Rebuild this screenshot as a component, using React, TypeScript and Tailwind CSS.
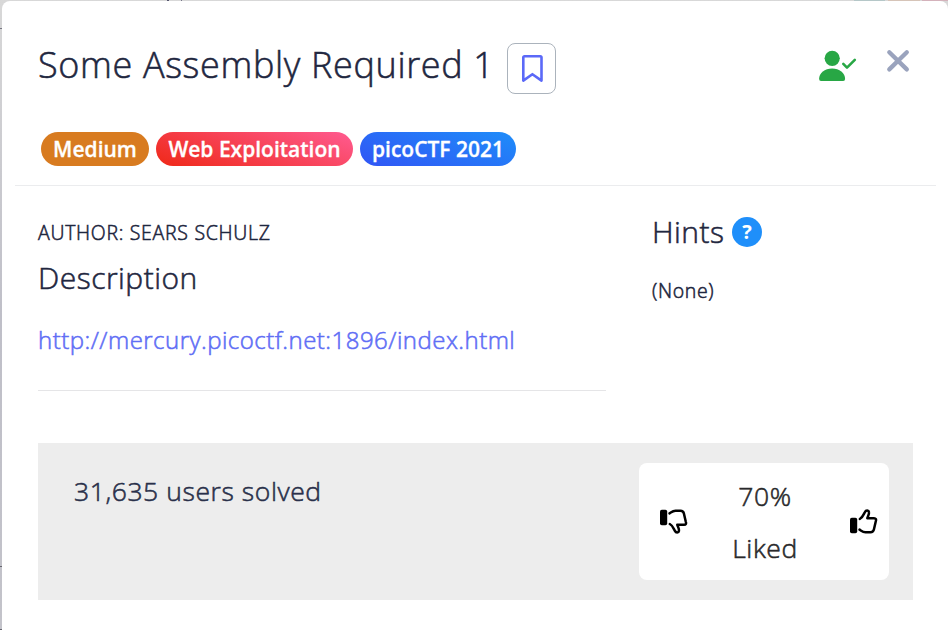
import React from 'react';

function Bookmark() {
  return (
    <svg width="23" height="29" viewBox="0 0 23 29" fill="none" stroke="#5b69f8" strokeWidth="2.6" strokeLinejoin="round" className="ml-0.5">
      <path d="M2.300 3.500q0-1.200 1.200-1.200h15.800q1.200 0 1.200 1.200v23.100l-9.100-6.400-9.100 6.400z" />
    </svg>
  );
}

function Solved() {
  return (
    <svg width="38" height="32" viewBox="0 0 38 32">
      <circle cx="13.2" cy="8.3" r="7.6" fill="#28a745" />
      <path d="M2 31q-1.9 0-1.9-1.9C.1 22.6 5.8 18.4 13.1 18.4S26.100 22.600 26.100 29.100Q26.100 31 24.200 31z" fill="#28a745" />
      <path d="M24.300 13.900L28 17.600L35.800 9.900" fill="none" stroke="#28a745" strokeWidth="2.600" strokeLinecap="round" strokeLinejoin="round" />
    </svg>
  );
}

function Close() {
  return (
    <svg width="24" height="24" viewBox="0 0 24 24" stroke="#9aa3bd" strokeWidth="4.300" strokeLinecap="round">
      <path d="M3.300 3.200L20.800 20.400M20.800 3.200L3.300 20.400" />
    </svg>
  );
}

function Thumb({ down = false }: { down?: boolean }) {
  return (
    <svg width="28" height="25" viewBox="0 0 28 25" className={down ? '-scale-y-100' : ''}>
      <rect x="0" y="8.800" width="7.200" height="15.500" rx="1.800" fill="#000" />
      <path
        d="M9.800 10C12.700 8.500 13.500 5.500 14.900 3.100C15.900 1.100 18.700 1.100 19 3.200C19.300 4.900 18 7 17.300 9.200H24C26 9.200 26.500 10.700 25.800 12.200L23.900 20.500C23.400 22.600 22.200 23.200 20.500 23.200H15.500C12.800 23.200 11.500 21.800 9.500 20.600"
        fill="none" stroke="#000" strokeWidth="2.500" strokeLinecap="round" strokeLinejoin="round"
      />
    </svg>
  );
}

const badge = 'flex h-[34px] items-center justify-center rounded-full pt-px text-[21px] font-semibold text-white whitespace-nowrap [-webkit-text-stroke:0.3px_currentColor]';

export default function App() {
  return (
    <div className="h-[630px] w-[948px] overflow-hidden bg-gradient-to-b from-[#d8d8d8] via-[#bfbfc8] to-[#c3c3ca] font-['Open_Sans',sans-serif] font-light text-[#1f2740] [-webkit-text-stroke:0.55px_currentColor]">
      <div className="flex h-px items-stretch">
        <div className="ml-[167px] w-[2px] bg-[#55566f]" />
        <div className="ml-3 w-px bg-[#77778a]" />
        <div className="ml-[672px] w-8 bg-[#b5c7c8]" />
        <div className="ml-[3px] w-8 bg-[#d6c4b8]" />
        <div className="ml-[2px] w-[27px] bg-[#d4b2bb]" />
      </div>
      <div className="flex h-[629px]">
        <div className="w-[2px] shrink-0 pt-[27px]">
          <div className="h-px bg-[#777783]" />
          <div className="mt-[537px] h-px bg-[#66666f]" />
          <div className="mt-[62px] h-px bg-[#66666f]" />
        </div>
        <main className="h-full w-[946px] rounded-t-lg bg-white">
          <header className="flex h-[93px] items-start pl-9 pt-[42px]">
            <h1 className="mt-[-3px] w-[469px] whitespace-nowrap text-[36px] leading-[49px] tracking-[0.65px]">Some Assembly Required 1</h1>
            <button className="flex h-[51px] w-[49px] items-center justify-center rounded-lg border border-[#abb3bc]"><Bookmark /></button>
            <div className="ml-[263px] mt-[7px]"><Solved /></div>
            <button className="ml-[29px] mt-[6px]"><Close /></button>
          </header>
          <div className="flex gap-[7px] pl-[39px] pt-[38px]">
            <span className={`${badge} w-[108px] bg-[#d87b20]`}>Medium</span>
            <span className={`${badge} w-[197px] bg-[linear-gradient(20deg,#ef2817,#ff5b91)]`}>Web Exploitation</span>
            <span className={`${badge} w-[156px] bg-[linear-gradient(20deg,#3155f5,#1e8df9)]`}>picoCTF 2021</span>
          </div>
          <hr className="ml-[13px] mt-[19px] w-[921px] border-[#ebecee]" />
          <div className="flex h-[257px] pl-9">
            <section className="w-[568px] pt-[33px]">
              <p className="text-[19.5px] leading-[28px] tracking-[0.7px]">AUTHOR: SEARS SCHULZ</p>
              <h2 className="mt-[11px] text-[30px] leading-[40px] tracking-[0.5px]">Description</h2>
              <a className="mt-[25px] block whitespace-nowrap text-[24px] leading-[34px] tracking-[0.48px] text-[#5f6ef5]">http://mercury.picoctf.net:1896/index.html</a>
              <hr className="mt-[33px] border-[#e5e5e7]" />
            </section>
            <aside className="ml-[46px] pt-[26px]">
              <div className="flex items-center">
                <h2 className="w-20 text-[30px] leading-[40px] tracking-[0.5px]">Hints</h2>
                <span className="flex size-[30px] items-center justify-center rounded-full bg-[#1f8ffa] text-[20px] font-bold text-white [-webkit-text-stroke:0px]">?</span>
              </div>
              <p className="mt-[25px] text-[19.5px] leading-[28px] tracking-[0.65px]">(None)</p>
            </aside>
          </div>
          <footer className="ml-9 flex h-[157px] w-[875px] items-start bg-[#ededed] pt-5 pl-9">
            <p className="w-[565px] pt-[8px] text-[26.5px] leading-[40px] tracking-[0.58px] text-[#29304a]">31,635 users solved</p>
            <div className="flex h-[117px] w-[250px] items-center justify-between rounded-lg bg-white pl-[21px] pr-[11px] text-[#29292b]">
              <Thumb down />
              <div className="mr-2 w-20 text-center text-[26.5px] leading-[52px] tracking-[0.6px]"><p>70%</p><p>Liked</p></div>
              <Thumb />
            </div>
          </footer>
        </main>
      </div>
    </div>
  );
}
